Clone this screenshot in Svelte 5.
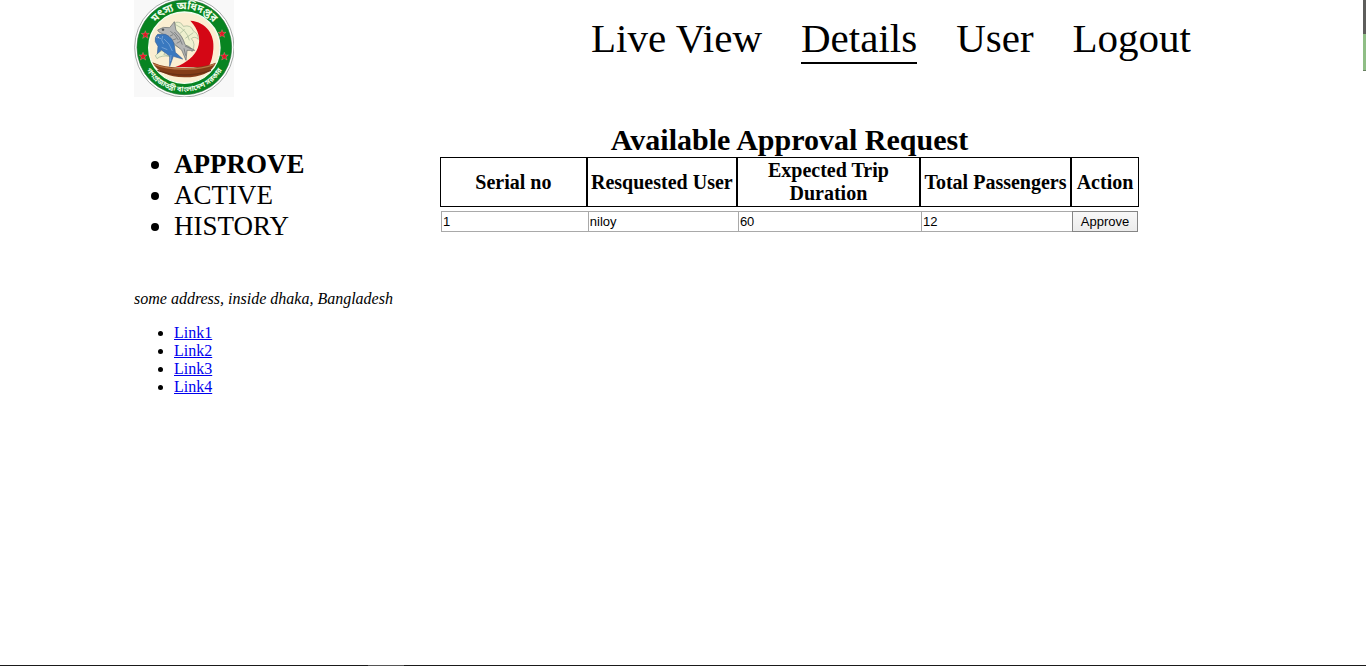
<script>
  const nav = ['Live View', 'Details', 'User', 'Logout'];
  const sections = ['APPROVE', 'ACTIVE', 'HISTORY'];
  const columns = ['Serial no', 'Resquested User', 'Expected Trip Duration', 'Total Passengers', 'Action'];
  const requests = [['1', 'niloy', '60', '12']];
  const links = ['Link1', 'Link2', 'Link3', 'Link4'];
  const stars = [[46, 104], [39, 169], [276, 101], [283, 169]];
</script>

<div class="page">
  <header>
    <svg class="logo" viewBox="12 0 300 291" role="img" aria-label="মৎস্য অধিদপ্তর">
      <defs>
        <path id="arc-top" d="M48 143 A115 115 0 0 1 278 143" />
        <path id="arc-bottom" d="M31 143 A132 132 0 0 0 295 143" />
        <clipPath id="disc"><circle cx="163" cy="143" r="107" /></clipPath>
      </defs>
      <rect x="12" width="300" height="291" fill="#f8f8f8" />
      <circle cx="163" cy="142" r="149" fill="#fff" stroke="#777d7a" stroke-width="2" />
      <circle cx="163" cy="142" r="142" fill="#078421" stroke="#2f7540" stroke-width="2" />
      <circle cx="163" cy="143" r="107" fill="#fbeed1" stroke="#f4fff1" stroke-width="4" />
      <g clip-path="url(#disc)">
        <path d="M181 62 C229 65 255 105 250 147 Q248 177 236 201 L136 201 C204 176 233 119 181 62Z" fill="#d40715" />
        <path d="M67 187 Q103 204 163 203 Q219 203 258 188 Q238 232 163 232 Q91 231 67 187Z" fill="#843d18" />
        <path d="M72 193 Q111 208 163 207 Q216 208 253 193" fill="none" stroke="#b97443" stroke-width="4" />
        <path d="M82 211 Q163 239 243 211" fill="none" stroke="#6b3116" stroke-width="4" />
      </g>
      <g fill="#eef0cf" stroke="#9db292" stroke-width="2">
        <path d="M137 67 Q153 64 160 79 Q184 73 190 93 Q205 100 205 118 Q194 107 184 116 Q199 131 186 156 Q184 139 171 137 L148 143 L128 133 L150 119 L130 99 Z" />
        <path d="M137 74 Q171 90 178 121 M149 101 L164 88 M166 115 L190 98" fill="none" />
        <path d="M76 167 Q96 146 115 148 L101 163 L119 169 Q94 165 81 176Z" />
      </g>
      <g fill="#b5b6b5" stroke="#62686a" stroke-width="2">
        <path d="M83 90 Q99 78 119 83 L133 65 L138 91 Q158 108 165 134 L194 151 L171 151 L168 181 L155 150 Q129 133 116 111 L87 96 Z" />
        <path d="M121 94 Q136 102 145 120 M133 96 Q151 111 157 134 M120 108 L129 104 M128 120 L139 116 M140 130 L151 124 M165 138 L184 147 M162 145 L167 167" fill="none" />
        <circle cx="99" cy="89" r="3" fill="#333" />
      </g>
      <g fill="#3978bf" stroke="#3d6297" stroke-width="2">
        <path d="M76 125 Q73 112 83 103 L106 103 Q131 113 134 142 L136 157 L158 177 L130 169 L119 199 L119 168 L94 150 L82 161 L84 139Z" />
        <path d="M78 112 L93 116 M98 108 Q91 121 101 132 M102 117 Q119 129 127 153 M95 142 L112 149 M123 165 L121 184" fill="none" stroke="#8db3df" />
        <circle cx="85" cy="112" r="3" fill="#d9e9fa" />
      </g>
      {#each stars as [x, y]}
        <polygon
          transform="translate({x} {y})"
          points="0,-12 3,-4 12,-4 5,2 8,11 0,6 -8,11 -5,2 -12,-4 -3,-4"
          fill="#e01725" stroke="#f4aaa3" stroke-width="1" />
      {/each}
      <g class="seal-text">
        <text><textPath href="#arc-top" startOffset="50%">মৎস্য অধিদপ্তর</textPath></text>
        <text class="small"><textPath href="#arc-bottom" startOffset="50%">গণপ্রজাতন্ত্রী বাংলাদেশ সরকার</textPath></text>
      </g>
    </svg>
    <nav>
      {#each nav as item}
        <a href="#top" class:current={item === 'Details'}>{item}</a>
      {/each}
    </nav>
  </header>

  <div class="content">
    <aside>
      <ul>
        {#each sections as section, i}
          <li class:selected={i === 0}>{section}</li>
        {/each}
      </ul>
    </aside>
    <main>
      <table>
        <caption>Available Approval Request</caption>
        <colgroup>
          <col class="serial" /><col class="user" /><col class="duration" /><col class="passengers" /><col class="action" />
        </colgroup>
        <thead>
          <tr>
            {#each columns as column}<th scope="col">{column}</th>{/each}
          </tr>
        </thead>
        <tbody>
          {#each requests as request}
            <tr>
              {#each request as value, i}
                <td><input readonly {value} aria-label={columns[i]} /></td>
              {/each}
              <td class="last"><button type="button">Approve</button></td>
            </tr>
          {/each}
        </tbody>
      </table>
    </main>
  </div>

  <footer>
    <address>some address, inside dhaka, Bangladesh</address>
    <ul>
      {#each links as link}<li><a href="#{link}">{link}</a></li>{/each}
    </ul>
  </footer>
</div>
<div class="side-strip"></div>
<div class="bottom-strip"></div>

<style>
  :global(body) {
    margin: 0;
    background: #fff;
  }
  .page {
    padding: 0 134px;
    color: #000;
    font: 16px/18px "Liberation Serif", "Times New Roman", serif;
  }
  header {
    display: flex;
    justify-content: space-between;
    align-items: flex-start;
  }
  .logo {
    width: 100px;
    height: 97px;
    flex: none;
  }
  .seal-text {
    fill: #eefbe9;
    font: bold 32px "Noto Sans Bengali", "Noto Sans", sans-serif;
    text-anchor: middle;
  }
  .seal-text .small {
    font-size: 22px;
  }
  nav {
    display: flex;
    gap: 39px;
    padding: 15px 41px 0 0;
    font-size: 41px;
    line-height: 47px;
  }
  nav a {
    color: #000;
    text-decoration: none;
    white-space: nowrap;
  }
  .current {
    border-bottom: 2px solid #000;
  }
  .content {
    display: flex;
    gap: 48px;
    padding-top: 25px;
  }
  aside {
    flex: 0 0 258px;
    padding-top: 27px;
    font-size: 27px;
    line-height: 31px;
  }
  ul {
    margin: 0;
    padding: 0 0 0 40px;
  }
  .selected {
    font-weight: bold;
  }
  main {
    flex: 0 1 699px;
  }
  table {
    width: 100%;
    table-layout: fixed;
    border-spacing: 0;
  }
  caption {
    font-size: 30px;
    line-height: 35px;
    font-weight: bold;
  }
  .serial { width: 21%; }
  .user { width: 150px; }
  .duration { width: 183px; }
  .passengers { width: 151px; }
  .action { width: 68px; }
  th {
    border: 1px solid #000;
    padding: 1px;
    font-size: 20px;
    line-height: 23px;
    white-space: normal;
  }
  td {
    padding: 4px 0 0 1px;
  }
  td.last {
    padding-right: 1px;
  }
  input,
  button {
    display: block;
    box-sizing: border-box;
    width: 100%;
    height: 21px;
    margin: 0;
    border: 1px solid #a9a9a9;
    border-radius: 0;
    font: 13px "Liberation Sans", Arial, sans-serif;
    color: #000;
  }
  input {
    width: calc(100% + 1px);
    padding: 1px;
    border-right: 0;
    background: #fff;
  }
  button {
    padding: 0;
    border-color: #858585;
    background: linear-gradient(#f8f8f8, #ececec);
  }
  footer {
    padding-top: 48px;
  }
  footer ul {
    margin-top: 16px;
  }
  footer a {
    color: #0000ee;
  }
  .side-strip {
    position: fixed;
    top: 0;
    right: 0;
    width: 3px;
    height: 71px;
    background: linear-gradient(#5d5d5b 34px, #8fbe85 34px 70px, #66805f 70px);
  }
  .bottom-strip {
    position: fixed;
    right: 0;
    bottom: 0;
    left: 0;
    height: 1px;
    background: linear-gradient(90deg, #1a1a1a 368px, #555 368px 404px, #1a1a1a 404px);
  }
</style>
